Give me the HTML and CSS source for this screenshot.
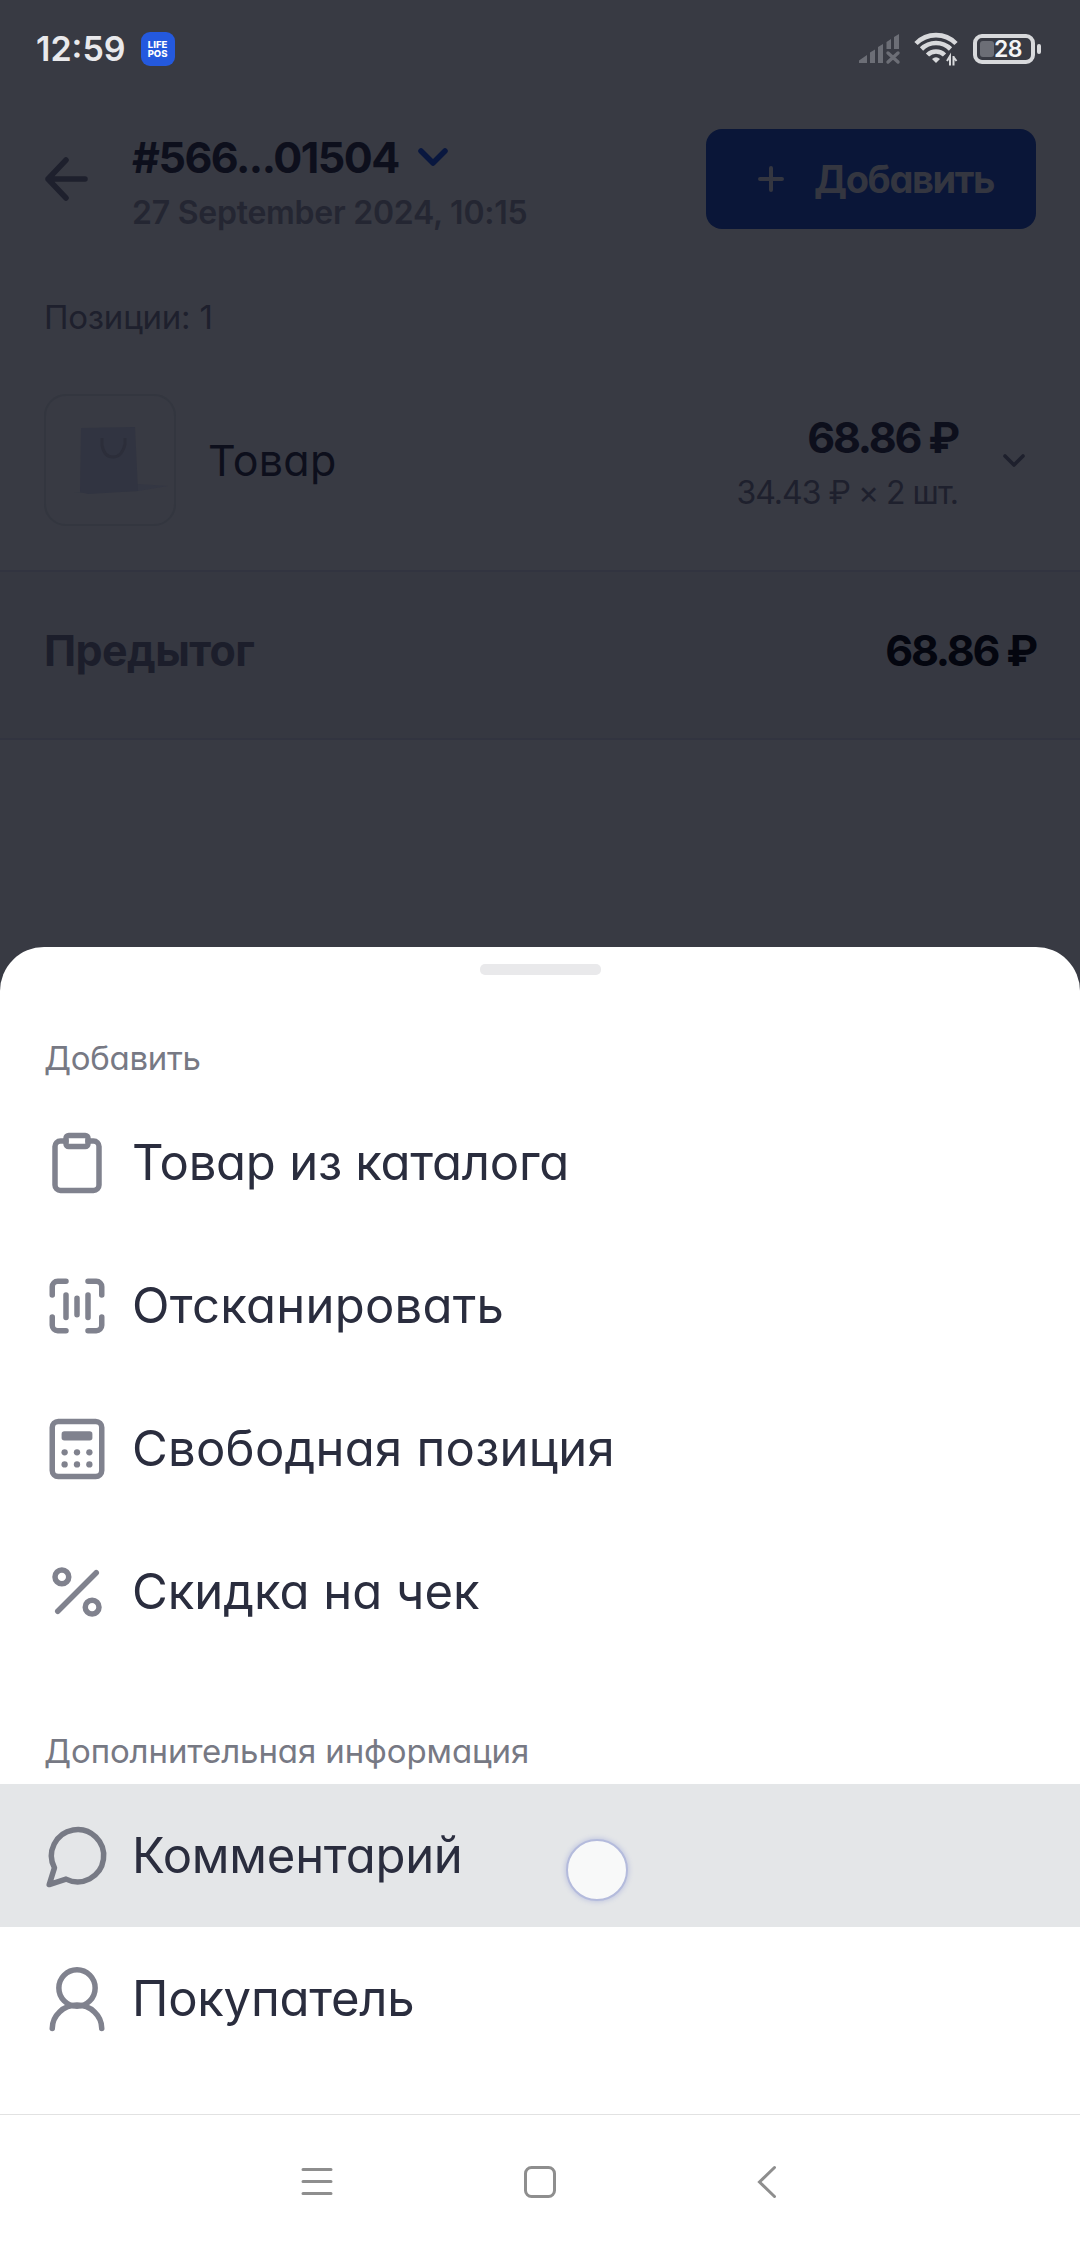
FILE: index.html
```
<!DOCTYPE html>
<html lang="ru">
<head>
  <meta charset="UTF-8" />
  <meta name="viewport" content="width=device-width, initial-scale=1.0" />
  <title>LIFE POS</title>
  <link rel="stylesheet" href="styles.css">
</head>
<body>
  <div class="screen">
    <div class="status-bar">
      <span class="time">12:59</span>
      <span class="app-badge"><span>LIFE</span><span>POS</span></span>
      <div class="status-icons">
        <svg class="signal" width="42" height="32" viewBox="0 0 42 32" fill="#6c6e76">
          <path d="M1 27.500L9 22v8H1zM12 19.500l5-3V30h-5zM20 14l5-3V30h-5zM28.500 9l4.500-3V16h-4.500zM36 4l5-3V16h-5z"/>
          <path d="M30 20l10 9M40 20l-10 9" stroke="#6c6e76" stroke-width="3.400" stroke-linecap="round"/>
        </svg>
        <svg class="wifi" width="44" height="36" viewBox="0 0 44 36" fill="none" stroke="#d8d9dc" stroke-width="4.600">
          <path d="M2 12.500a28 28 0 0 1 40 0M7.500 18a20.500 20.500 0 0 1 29 0M13.500 24a12 12 0 0 1 17 0"/>
          <path d="M18 28q4-3.500 8 0l-4 4z" fill="#d8d9dc" stroke="none"/>
          <path d="M36 34.500V25l-3 5M39.500 25v9.500M39.500 26l3 4" stroke-width="2"/>
        </svg>
        <div class="battery"><span class="charge"></span><span class="percent">28</span></div>
        <span class="battery-tip"></span>
      </div>
    </div>

    <div class="header">
      <svg class="back" width="44" height="44" viewBox="0 0 44 44" fill="none" stroke="#1e202d" stroke-width="5.500" stroke-linecap="round" stroke-linejoin="round">
        <path d="M41 22H4M22 3L4 22l18 19"/>
      </svg>
      <div class="order">
        <div class="order-number"><span class="order-id">#566...01504</span>
          <svg width="32" height="20" viewBox="0 0 32 20" fill="none" stroke="#09173f" stroke-width="5.500" stroke-linecap="round" stroke-linejoin="round"><path d="M4 4l12 12L28 4"/></svg>
        </div>
        <div class="order-date">27 September 2024, 10:15</div>
      </div>
      <button class="add-btn">
        <svg width="26" height="26" viewBox="0 0 26 26" stroke="#343640" stroke-width="4" stroke-linecap="round"><path d="M13 2v22M2 13h22"/></svg>
        <span>Добавить</span>
      </button>
    </div>

    <div class="positions">Позиции: 1</div>

    <div class="product">
      <div class="thumb">
        <svg width="128" height="128" viewBox="0 0 128 128">
          <path d="M28 97l64-2 30-5-30-2z" fill="#343743"/>
          <path d="M35 32l54-1 3 64-50 3-8-2z" fill="#313441"/>
          <path d="M56 42v7q2 12 11 12t12-13v-6" fill="none" stroke="#2c2e3a" stroke-width="3"/>
        </svg>
      </div>
      <span class="product-name">Товар</span>
      <div class="product-price">
        <div class="price">68.86 ₽</div>
        <div class="quantity">34.43 ₽ × 2 шт.</div>
      </div>
      <svg class="expand" width="24" height="16" viewBox="0 0 24 16" fill="none" stroke="#1e202d" stroke-width="3.600" stroke-linecap="round" stroke-linejoin="round"><path d="M3 4l9 9 9-9"/></svg>
    </div>

    <div class="subtotal">
      <span class="subtotal-label">Предытог</span>
      <span class="subtotal-sum">68.86 ₽</span>
    </div>

    <div class="sheet">
      <div class="handle"></div>
      <div class="group-title first">Добавить</div>
      <div class="item">
        <svg class="icon" viewBox="0 0 24 24"><path d="M16 4h2a2 2 0 0 1 2 2v14a2 2 0 0 1-2 2H6a2 2 0 0 1-2-2V6a2 2 0 0 1 2-2h2"/><rect x="8" y="2" width="8" height="4" rx="1"/></svg>
        <span class="tight">Товар из каталога</span>
      </div>
      <div class="item">
        <svg class="icon" viewBox="0 0 24 24"><path d="M3 8V5a2 2 0 0 1 2-2h3M16 3h3a2 2 0 0 1 2 2v3M21 16v3a2 2 0 0 1-2 2h-3M8 21H5a2 2 0 0 1-2-2v-3M8 8v8.200M12 9.200v6M16 8v8.200"/></svg>
        <span class="wide">Отсканировать</span>
      </div>
      <div class="item">
        <svg class="icon" viewBox="0 0 24 24"><rect x="3" y="2" width="18" height="20" rx="2.200"/><g fill="#80828e" stroke="none"><rect x="6.400" y="5.500" width="11.200" height="3.400" rx="1"/><circle cx="7.500" cy="13.200" r="1.150"/><circle cx="12" cy="13.200" r="1.150"/><circle cx="16.500" cy="13.200" r="1.150"/><circle cx="7.500" cy="17.600" r="1.150"/><circle cx="12" cy="17.600" r="1.150"/><circle cx="16.500" cy="17.600" r="1.150"/></g></svg>
        <span class="wide">Свободная позиция</span>
      </div>
      <div class="item">
        <svg class="icon" viewBox="0 0 24 24"><path d="M19 5L5 19"/><circle cx="6.500" cy="6.500" r="2.500"/><circle cx="17.500" cy="17.500" r="2.500"/></svg>
        <span>Скидка на чек</span>
      </div>

      <div class="group-title">Дополнительная информация</div>
      <div class="item pressed">
        <svg class="icon" viewBox="0 0 24 24"><path d="M8 20.400A9.500 9.500 0 1 0 3.800 16.300L1.900 22.400z"/></svg>
        <span class="tight">Комментарий</span>
        <div class="touch"></div>
      </div>
      <div class="item">
        <svg class="icon" viewBox="0 0 24 24"><circle cx="12" cy="8" r="6.600"/><path d="M3 22.700a9 8.500 0 0 1 18 0"/></svg>
        <span class="tight">Покупатель</span>
      </div>

      <div class="nav-bar">
        <svg width="32" height="32" viewBox="0 0 32 32"><path d="M2 3.500h28M2 15.500h28M2 27.500h28"/></svg>
        <svg class="home" width="32" height="32" viewBox="0 0 32 32"><rect x="1.500" y="1.500" width="29" height="29" rx="6"/></svg>
        <svg width="32" height="32" viewBox="0 0 32 32"><path d="M23.500 1.500L8.500 16l15 14.500"/></svg>
      </div>
    </div>
  </div>
</body>
</html>
```
FILE: styles.css
```
* {
  box-sizing: border-box;
}

body {
  margin: 0;
  background: #383a43;
  font-family: 'Inter', 'Liberation Sans', sans-serif;
  font-feature-settings: "cv11";
  color: #0d0f1c;
}

.screen {
  width: 1080px;
  height: 2244px;
  display: flex;
  flex-direction: column;
  overflow: hidden;
  background: #383a43;
}

svg {
  display: block;
  flex: none;
  overflow: visible;
}

.status-bar {
  height: 97px;
  padding: 0 39px 0 36px;
  display: flex;
  align-items: center;
}

.time {
  font-size: 34px;
  font-weight: 600;
  color: #e9e9ec;
}

.app-badge {
  width: 34px;
  height: 34px;
  margin-left: 15px;
  border-radius: 9px;
  background: #2459de;
  color: #fff;
  font-size: 9.5px;
  font-weight: 800;
  line-height: 9px;
  display: flex;
  flex-direction: column;
  align-items: center;
  justify-content: center;
}

.status-icons {
  margin-left: auto;
  display: flex;
  align-items: center;
}

.wifi {
  margin: 0 15px 0 14px;
}

.battery {
  width: 62px;
  height: 30px;
  border: 4px solid #d8d9dc;
  border-radius: 9px;
  padding: 3px;
  position: relative;
}

.charge {
  display: block;
  width: 14px;
  height: 16px;
  border-radius: 3px;
  background: #6c6e76;
}

.percent {
  position: absolute;
  inset: 0 0 0 8px;
  text-align: center;
  font-size: 23px;
  font-weight: 600;
  line-height: 23px;
  letter-spacing: -0.5px;
  color: #f4f4f6;
}

.battery-tip {
  width: 4px;
  height: 10px;
  margin-left: 2px;
  border-radius: 2px;
  background: #d8d9dc;
}

.header {
  height: 164px;
  padding: 0 44px;
  display: flex;
  align-items: center;
}

.order {
  margin-left: 44px;
  padding-top: 10px;
}

.order-number {
  display: flex;
  align-items: center;
  gap: 18px;
  height: 56px;
  font-size: 43px;
  font-weight: 700;
}

.order-id {
  letter-spacing: -1.5px;
}

.order-date {
  height: 54px;
  line-height: 56px;
  font-size: 32px;
  font-weight: 600;
  letter-spacing: -0.25px;
  color: #242632;
}

.add-btn {
  width: 330px;
  height: 100px;
  margin-left: auto;
  padding: 0 42px 0 52px;
  display: flex;
  align-items: center;
  justify-content: space-between;
  border: none;
  border-radius: 16px;
  background: #0a1638;
  color: #343640;
  font: inherit;
  font-size: 38px;
  font-weight: 700;
  letter-spacing: -1.4px;
}

.positions {
  height: 113px;
  padding: 0 44px;
  line-height: 113px;
  font-size: 33px;
  letter-spacing: -0.25px;
  color: #1e202d;
}

.product {
  height: 196px;
  padding: 20px 54px 44px 44px;
  display: flex;
  align-items: center;
}

.thumb {
  width: 132px;
  height: 132px;
  border: 2px solid #33363f;
  border-radius: 22px;
}

.product-name {
  margin-left: 32px;
  font-size: 43px;
  letter-spacing: 0.3px;
}

.product-price {
  margin-left: auto;
  padding-top: 11px;
  text-align: right;
}

.price {
  line-height: 55px;
  font-size: 43px;
  font-weight: 700;
  letter-spacing: -2.2px;
}

.quantity {
  line-height: 56px;
  font-size: 32px;
  letter-spacing: -1px;
  color: #1e202d;
}

.expand {
  margin-left: 44px;
}

.subtotal {
  height: 170px;
  padding: 0 44px 10px;
  display: flex;
  align-items: center;
  justify-content: space-between;
  border-top: 2px solid #323440;
  border-bottom: 2px solid #323440;
  background: #363841;
  font-size: 43px;
  font-weight: 700;
}

.subtotal-label {
  letter-spacing: -0.6px;
  color: #1c1e2b;
}

.subtotal-sum {
  letter-spacing: -2.2px;
  color: #04060f;
}

.sheet {
  height: 1297px;
  margin-top: auto;
  padding-top: 17px;
  border-radius: 44px 44px 0 0;
  background: #fff;
  display: flex;
  flex-direction: column;
}

.handle {
  width: 121px;
  height: 11px;
  margin: 0 auto;
  border-radius: 5px;
  background: #e9e9eb;
}

.group-title {
  height: 121px;
  padding: 55px 44px 0;
  line-height: 67px;
  font-size: 33px;
  letter-spacing: -0.1px;
  color: #777984;
}

.group-title.first {
  height: 116px;
  padding-top: 50px;
  letter-spacing: -0.3px;
}

.item {
  height: 143px;
  padding: 0 44px;
  display: flex;
  align-items: center;
  gap: 22px;
  position: relative;
  font-size: 49px;
  color: #2a2d3e;
}

.tight {
  letter-spacing: -0.25px;
}

.wide {
  letter-spacing: 0.25px;
}

.icon {
  width: 66px;
  height: 66px;
  fill: none;
  stroke: #80828e;
  stroke-width: 2;
  stroke-linecap: round;
  stroke-linejoin: round;
}

.pressed {
  background: #e4e6e8;
}

.pressed .icon {
  stroke: #777a85;
}

/* finger mark over the pressed row */
.touch {
  position: absolute;
  left: 566px;
  top: 55px;
  width: 62px;
  height: 62px;
  border: 2px solid #b4bbdc;
  border-radius: 50%;
  background: #f8f9f9;
  box-shadow: 0 0 5px 1px #c0c6e0;
}

.nav-bar {
  height: 130px;
  margin-top: auto;
  padding: 5px 297px 0 301px;
  display: flex;
  align-items: center;
  justify-content: space-between;
  border-top: 1px solid #e2e2e2;
}

.nav-bar svg {
  fill: none;
  stroke: #8e8e8e;
  stroke-width: 3;
  stroke-linecap: round;
}

.nav-bar .home {
  margin-right: 4px;
}
```
